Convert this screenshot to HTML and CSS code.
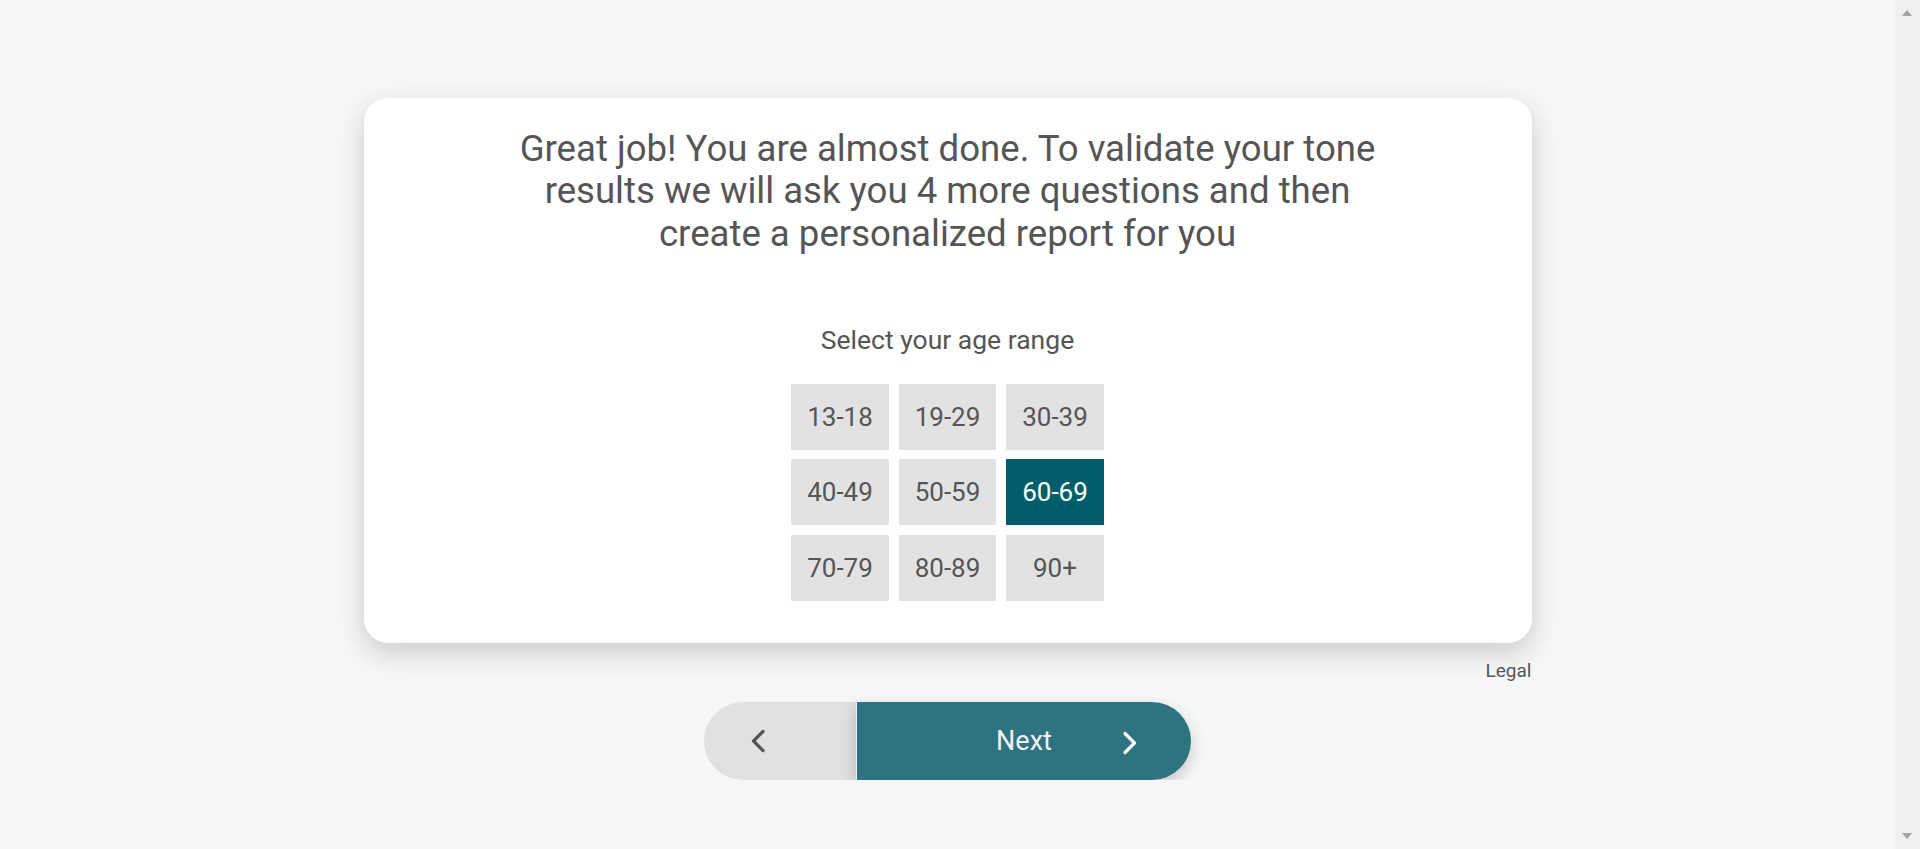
FILE: index.html
```html
<!DOCTYPE html>
<html lang="en">
<head>
<meta charset="utf-8">
<title>Age range</title>
<link rel="stylesheet" href="styles.css">
</head>
<body>
<div class="page">
  <main class="card">
    <h1 class="title">Great job! You are almost done. To validate your tone<br>results we will ask you 4 more questions and then<br>create a personalized report for you</h1>
    <p class="label">Select your age range</p>
    <div class="grid">
      <button class="age">13-18</button>
      <button class="age">19-29</button>
      <button class="age">30-39</button>
      <button class="age">40-49</button>
      <button class="age">50-59</button>
      <button class="age selected">60-69</button>
      <button class="age">70-79</button>
      <button class="age">80-89</button>
      <button class="age">90+</button>
    </div>
  </main>
  <div class="legal-row"><a class="legal" href="#">Legal</a></div>
  <nav class="nav">
    <button class="back" aria-label="Back">
      <svg width="16" height="24" viewBox="0 0 16 24"><path d="M13 2.5 L3.5 12 L13 21.5" fill="none" stroke="#555" stroke-width="3.2" stroke-linecap="round" stroke-linejoin="round"/></svg>
    </button>
    <button class="next">
      <span class="next-text">Next</span>
      <svg class="next-icon" width="16" height="24" viewBox="0 0 16 24"><path d="M3 2.5 L12.5 12 L3 21.5" fill="none" stroke="#fff" stroke-width="3.2" stroke-linecap="round" stroke-linejoin="round"/></svg>
    </button>
  </nav>
</div>
<div class="scrollbar">
  <span class="arrow up"></span>
  <span class="arrow down"></span>
</div>
</body>
</html>
```
FILE: styles.css
```css
body {
  margin: 0;
  background: #f6f7f9;
  font-family: Roboto, "Liberation Sans", Arial, sans-serif;
  color: #555555;
}
.page {
  padding: 98px 25px 0 0;
  display: flex;
  flex-direction: column;
  align-items: center;
}
.card {
  width: 1168px;
  box-sizing: border-box;
  background: #ffffff;
  border-radius: 24px;
  padding: 29.5px 0 42px;
  box-shadow: 0 10px 28px rgba(0, 0, 0, 0.18);
  display: flex;
  flex-direction: column;
  align-items: center;
}
.title {
  margin: 0;
  font-size: 36.6px;
  font-weight: 400;
  line-height: 42.5px;
  text-align: center;
  color: #555555;
}
.label {
  margin: 69px 0 0;
  font-size: 26.5px;
  line-height: 31px;
  color: #555555;
}
.grid {
  margin-top: 28.5px;
  display: grid;
  grid-template-columns: repeat(3, 97.5px);
  grid-auto-rows: 66px;
  column-gap: 10px;
  row-gap: 9.5px;
}
.age {
  border: 0;
  margin: 0;
  padding: 0;
  background: #e2e2e2;
  color: #555555;
  font-family: Roboto, "Liberation Sans", Arial, sans-serif;
  font-size: 26px;
  cursor: pointer;
}
.age.selected {
  background: #005e6a;
  color: #ffffff;
}
.legal-row {
  width: 1168px;
  display: flex;
  justify-content: flex-end;
  margin-top: 17px;
}
.legal {
  font-size: 19px;
  line-height: 22px;
  color: #555555;
  text-decoration: none;
}
.nav {
  margin-top: 20px;
  display: flex;
  height: 78px;
}
.back {
  width: 152px;
  border: 0;
  margin: 0;
  padding: 0 0 0 46px;
  background: #e1e1e1;
  border-radius: 39px 0 0 39px;
  display: flex;
  align-items: center;
  justify-content: flex-start;
  cursor: pointer;
}
.next {
  width: 335px;
  border: 0;
  border-left: 1px solid #eeeeee;
  margin: 0;
  padding: 0;
  background: #2d7480;
  border-radius: 0 39px 39px 0;
  box-shadow: 0 6px 16px rgba(0, 0, 0, 0.2);
  position: relative;
  display: flex;
  align-items: center;
  justify-content: center;
  font-family: Roboto, "Liberation Sans", Arial, sans-serif;
  font-size: 27px;
  font-weight: 400;
  cursor: pointer;
}
.next-text {
  color: #f2f2f2;
}
.next-icon {
  position: absolute;
  right: 53px;
  top: 29px;
}
.scrollbar {
  position: fixed;
  top: 0;
  right: 0;
  width: 25px;
  height: 100%;
  background: #f0f0f0;
}
.arrow {
  position: absolute;
  left: 7px;
  width: 0;
  height: 0;
  border-left: 5.5px solid transparent;
  border-right: 5.5px solid transparent;
}
.arrow.up {
  top: 10px;
  border-bottom: 6px solid #a3a3a3;
}
.arrow.down {
  bottom: 10px;
  border-top: 6px solid #a3a3a3;
}
```
